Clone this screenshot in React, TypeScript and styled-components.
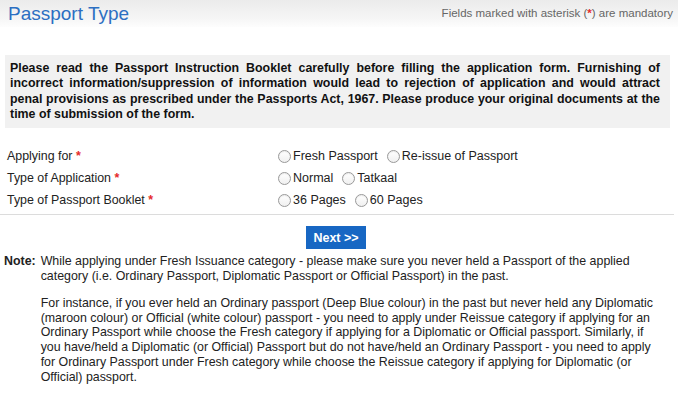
import React from "react";
import styled, { createGlobalStyle } from "styled-components";

const GlobalStyle = createGlobalStyle`
  html, body {
    margin: 0;
    padding: 0;
    background: #fff;
    font-family: "Liberation Sans", Arial, sans-serif;
    color: #111;
  }
`;

type Option = { value: string; label: string };

type Row = { label: string; name: string; options: Option[] };

const rows: Row[] = [
  {
    label: "Applying for",
    name: "applyingFor",
    options: [
      { value: "fresh", label: "Fresh Passport" },
      { value: "reissue", label: "Re-issue of Passport" },
    ],
  },
  {
    label: "Type of Application",
    name: "appType",
    options: [
      { value: "normal", label: "Normal" },
      { value: "tatkaal", label: "Tatkaal" },
    ],
  },
  {
    label: "Type of Passport Booklet",
    name: "booklet",
    options: [
      { value: "36", label: "36 Pages" },
      { value: "60", label: "60 Pages" },
    ],
  },
];

function App() {
  return (
    <Page>
      <GlobalStyle />
      <Header>
        <Title>Passport Type</Title>
        <Mandatory>
          Fields marked with asterisk (<Star>*</Star>) are mandatory
        </Mandatory>
      </Header>

      <InstructionBox>
        Please read the Passport Instruction Booklet carefully before filling the
        application form. Furnishing of incorrect information/suppression of
        information would lead to rejection of application and would attract penal
        provisions as prescribed under the Passports Act, 1967. Please produce your
        original documents at the time of submission of the form.
      </InstructionBox>

      <Form>
        {rows.map((row) => (
          <FormRow key={row.name}>
            <Label>
              {row.label} <Star>*</Star>
            </Label>
            <Options>
              {row.options.map((opt) => (
                <RadioLabel key={opt.value}>
                  <Radio type="radio" name={row.name} value={opt.value} />
                  {opt.label}
                </RadioLabel>
              ))}
            </Options>
          </FormRow>
        ))}
      </Form>

      <ButtonBar>
        <NextButton type="button">Next &gt;&gt;</NextButton>
      </ButtonBar>

      <Note>
        <NoteTag>Note:</NoteTag>
        <NoteBody>
          <p>
            While applying under Fresh Issuance category - please make sure you
            never held a Passport of the applied category (i.e. Ordinary Passport,
            Diplomatic Passport or Official Passport) in the past.
          </p>
          <p>
            For instance, if you ever held an Ordinary passport (Deep Blue colour)
            in the past but never held any Diplomatic (maroon colour) or Official
            (white colour) passport - you need to apply under Reissue category if
            applying for an Ordinary Passport while choose the Fresh category if
            applying for a Diplomatic or Official passport. Similarly, if you
            have/held a Diplomatic (or Official) Passport but do not have/held an
            Ordinary Passport - you need to apply for Ordinary Passport under Fresh
            category while choose the Reissue category if applying for Diplomatic
            (or Official) passport.
          </p>
        </NoteBody>
      </Note>
    </Page>
  );
}

const Page = styled.div`
  width: 696px;
  height: 410px;
  overflow: hidden;
`;

const Header = styled.div`
  display: flex;
  align-items: center;
  justify-content: space-between;
  width: 678px;
  height: 27px;
  padding: 0 5px 0 8px;
  box-sizing: border-box;
  background: linear-gradient(to bottom, #ebebeb 0%, #f6f6f6 70%, #fdfdfd 100%);
`;

const Title = styled.h1`
  margin: 0;
  font-size: 19px;
  font-weight: 400;
  color: #2c6fc2;
`;

const Mandatory = styled.span`
  font-size: 11.5px;
  color: #666;
  margin-top: -1px;
`;

const Star = styled.span`
  color: #e52b2b;
  font-weight: 700;
`;

const InstructionBox = styled.div`
  width: 665px;
  box-sizing: border-box;
  margin: 28px 0 0 5px;
  padding: 6px 10px 6px 5px;
  background: #f1f1f1;
  font-size: 12.4px;
  font-weight: 700;
  line-height: 15.3px;
  text-align: justify;
  color: #111;
`;

const Form = styled.div`
  margin-top: 17px;
  padding-bottom: 3px;
  border-bottom: 1px solid #dcdcdc;
  width: 674px;
`;

const FormRow = styled.div`
  display: grid;
  grid-template-columns: 271px 1fr;
  align-items: center;
  height: 22px;
  padding-left: 7px;
  font-size: 12.4px;
`;

const Label = styled.span`
  color: #222;
`;

const Options = styled.div`
  display: flex;
  align-items: center;
  gap: 9px;
`;

const RadioLabel = styled.label`
  display: inline-flex;
  align-items: center;
  gap: 2px;
  font-size: 12.5px;
  color: #222;
`;

const Radio = styled.input`
  appearance: none;
  margin: 0;
  width: 13px;
  height: 13px;
  border-radius: 50%;
  border: 1px solid #999;
  background: linear-gradient(to bottom, #fff, #f0f0f0);
  box-shadow: inset 0 1px 1px rgba(0, 0, 0, 0.08);
  box-sizing: border-box;
`;

const ButtonBar = styled.div`
  display: flex;
  padding: 11px 0 0 306px;
`;

const NextButton = styled.button`
  width: 60px;
  height: 23px;
  border: 0;
  border-radius: 0;
  background: #1767c3;
  color: #fff;
  font-family: "Liberation Sans", Arial, sans-serif;
  font-size: 12.5px;
  font-weight: 700;
  padding: 0;
`;

const Note = styled.div`
  display: flex;
  gap: 5px;
  padding: 5px 0 0 4px;
  font-size: 12.4px;
  line-height: 14.8px;
  color: #222;
`;

const NoteTag = styled.span`
  font-weight: 700;
`;

const NoteBody = styled.div`
  width: 624px;

  p {
    margin: 0 0 12px;
  }
`;

export default App;
